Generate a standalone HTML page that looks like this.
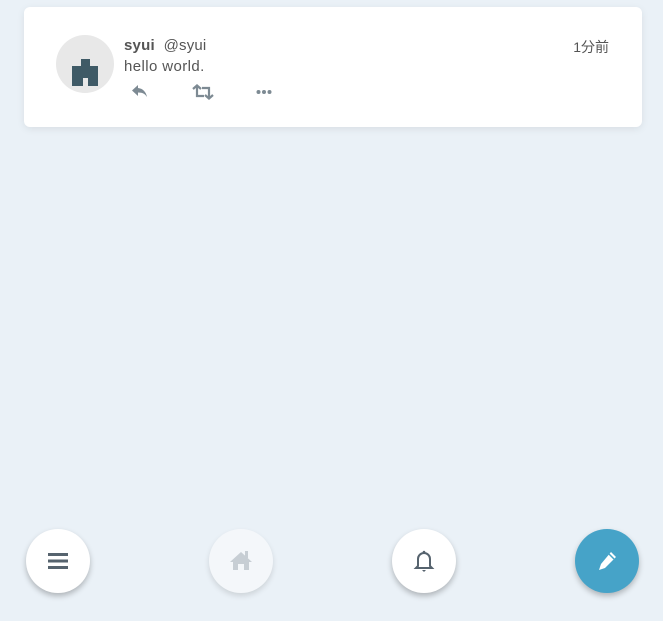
<!DOCTYPE html>
<html><head><meta charset="utf-8"><style>
body{margin:0;width:663px;height:621px;background:#eaf1f7;font-family:"Liberation Sans","Noto Sans CJK JP",sans-serif;position:relative;overflow:hidden}
.card{position:absolute;left:24px;top:7px;width:618px;height:120px;background:#fff;border-radius:6px;box-shadow:0 2px 8px rgba(0,0,0,.08)}
.av{position:absolute;left:32px;top:28px;width:58px;height:58px;border-radius:50%;background:#e8e8e8;overflow:hidden}
.name{position:absolute;left:100px;top:30px;font-size:15px;color:#555;letter-spacing:.2px}
.txt{position:absolute;left:100px;top:51px;font-size:15px;color:#555;letter-spacing:.4px}
.time{position:absolute;right:33px;top:30px;font-size:14px;color:#555}
.btn{position:absolute;top:529px;width:64px;height:64px;border-radius:50%;background:#fff;box-shadow:0 3px 6px rgba(0,0,0,.25)}
.btn svg{position:absolute;left:20px;top:20px}
</style></head><body>
<div class="card">
<div class="av"><svg width="58" height="58"><path d="M25 24h9v7h8v20h-10v-8h-5v8h-11v-20h9z" fill="#3f5a66"/></svg></div>
<div class="name"><b>syui</b>&nbsp; @syui</div>
<div class="txt">hello world.</div>
<div class="time">1分前</div>
<svg style="position:absolute;left:106px;top:76px" width="20" height="16"><path d="M8 2L2 7.5 8 13V9.5c5 0 7 1.5 9 4.5-1-5-4-8.5-9-9z" fill="#7d8a93"/></svg>
<svg style="position:absolute;left:167px;top:77px" width="24" height="16"><path d="M2 5l4-3.5 4 3.5M6 2v10h7M22 11l-4 3.5-4-3.5M18 14V4h-7" fill="none" stroke="#7d8a93" stroke-width="2.2"/></svg>
<svg style="position:absolute;left:232px;top:82px" width="16" height="6"><circle cx="2.5" cy="3" r="2" fill="#7d8a93"/><circle cx="8" cy="3" r="2" fill="#7d8a93"/><circle cx="13.5" cy="3" r="2" fill="#7d8a93"/></svg>
</div>
<div class="btn" style="left:26px"><svg width="24" height="24"><rect x="2" y="4" width="20" height="3" fill="#56636e"/><rect x="2" y="10.5" width="20" height="3" fill="#56636e"/><rect x="2" y="17" width="20" height="3" fill="#56636e"/></svg></div>
<div class="btn" style="left:209px;background:#f4f7fa;box-shadow:0 3px 6px rgba(0,0,0,.12)"><svg width="24" height="24"><path d="M1 13L12 3l11 10h-3v8h-5v-6h-6v6H4v-8z" fill="#c7ced4"/><rect x="16" y="2" width="3" height="7" fill="#c7ced4"/></svg></div>
<div class="btn" style="left:392px"><svg width="24" height="24"><path d="M6 17V10a6 6 0 0112 0v7l2 2H4z" fill="none" stroke="#56636e" stroke-width="2"/><path d="M10 21h4l-2 2z" fill="#56636e"/><circle cx="12" cy="3" r="1.3" fill="#56636e"/></svg></div>
<div class="btn" style="left:575px;background:#46a3c8"><svg width="24" height="24"><path d="M16 3l5 5-11 11-6 2 2-6z" fill="#fff"/><path d="M14 5l5 5" stroke="#46a3c8" stroke-width="1.5"/></svg></div>
</body></html>
